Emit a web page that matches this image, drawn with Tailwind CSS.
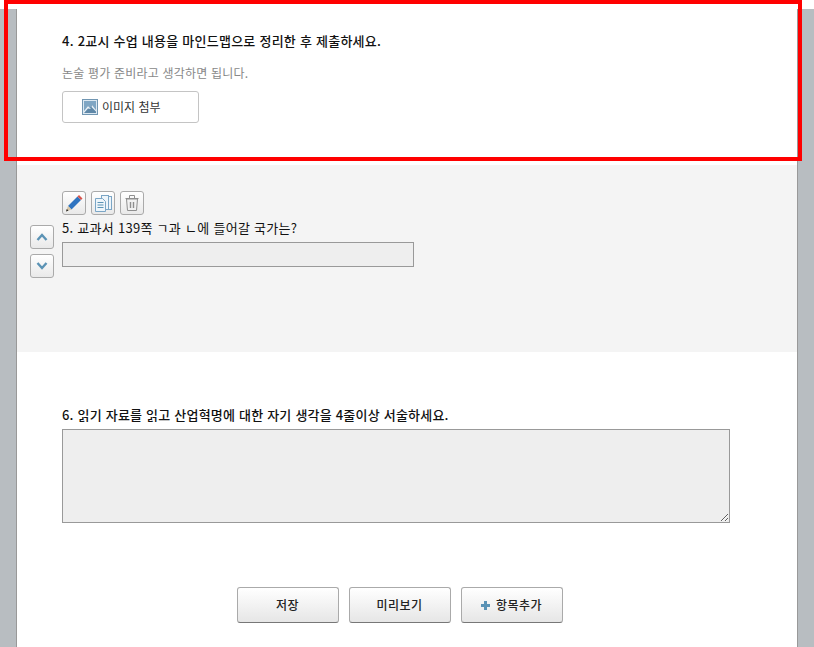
<!DOCTYPE html>
<html lang="ko">
<head>
    <meta charset="UTF-8">
    <title>항목 편집</title>
    <script src="https://cdn.jsdelivr.net/npm/@tailwindcss/browser@4"></script>
</head>
<body class="bg-white font-['Noto_Sans_CJK_KR','Liberation_Sans',sans-serif] text-[13px] text-[#222]">
    <div class="relative h-[647px] overflow-hidden">
        <!-- Gray page background -->
        <div class="mt-[9px] h-[638px] bg-[#b8bdc1] pl-[16px]">
            <div class="h-full w-[782px] border-x border-[#999] bg-white">

                <!-- Question 4 -->
                <section class="h-[156px] pl-[45px] pt-[22px]">
                    <p class="h-[20px] leading-[20px] font-medium tracking-[0.24px] text-[#111]">4. 2교시 수업 내용을 마인드맵으로 정리한 후 제출하세요.</p>
                    <p class="mt-[12px] h-[20px] leading-[20px] text-[12px] tracking-[0.2px] text-[#888]">논술 평가 준비라고 생각하면 됩니다.</p>
                    <button class="mt-[8px] flex h-[32px] w-[137px] items-center gap-[4px] rounded-[3px] border border-[#c4c4c4] bg-white pl-[19px] text-[12px] text-[#333]">
                        <svg width="16" height="16" viewBox="0 0 16 16">
                            <rect x="0.5" y="0.5" width="15" height="15" fill="#dce8f1" stroke="#7196b2"/>
                            <rect x="2" y="2" width="12" height="12" fill="#7fa6c4"/>
                            <path d="M2 12 L6 7 L8 9 L10 6 L14 11 L14 14 L2 14 Z" fill="#5f88a8"/>
                            <path d="M2 12 L6 7 L8 9 L9 10 L6 9.5 L2 14 Z" fill="#e8f0f6"/>
                            <path d="M10 6 L14 11 L14 12.5 L9.5 8 Z" fill="#e8f0f6"/>
                        </svg>
                        이미지 첨부
                    </button>
                </section>

                <!-- Question 5 -->
                <section class="h-[187px] bg-[#f4f4f4] pl-[13px] pt-[26px]">
                    <div class="grid grid-cols-[24px_352px] gap-x-[8px]">
                        <div></div>
                        <div class="flex gap-[5px]">
                            <button class="flex h-[24px] w-[24px] items-center justify-center rounded-[3px] border border-[#aaa] bg-gradient-to-b from-white to-[#e9e9e9]">
                                <svg width="20" height="20" viewBox="0 0 20 20">
                                    <path d="M4 13 L13.5 3.5 L17 7 L7.5 16.5 Z" fill="#2f74c0"/>
                                    <path d="M13.5 3.5 L15 2 L18.5 5.5 L17 7 Z" fill="#d9534a"/>
                                    <path d="M4 13 L7.5 16.5 L2 18.5 Z" fill="#d8c7a8"/>
                                    <path d="M2 18.5 L2.8 16 L4.5 17.6 Z" fill="#222"/>
                                </svg>
                            </button>
                            <button class="flex h-[24px] w-[24px] items-center justify-center rounded-[3px] border border-[#aaa] bg-gradient-to-b from-white to-[#e9e9e9]">
                                <svg width="20" height="20" viewBox="0 0 20 20" fill="#eef5fa" stroke="#7ba6c6">
                                    <rect x="11.5" y="3.5" width="7" height="13"/>
                                    <rect x="8.5" y="2.5" width="7" height="14"/>
                                    <path d="M2.5 5.5 H9.5 L12.5 8.5 V18.5 H2.5 Z"/>
                                    <path d="M4.5 9.5 H10.5 M4.5 12 H10.5 M4.5 14.5 H10.5" fill="none" stroke="#5b93b5"/>
                                </svg>
                            </button>
                            <button class="flex h-[24px] w-[24px] items-center justify-center rounded-[3px] border border-[#aaa] bg-gradient-to-b from-white to-[#e9e9e9]">
                                <svg width="16" height="18" viewBox="0 0 16 18" fill="none" stroke="#8f8f8f">
                                    <path d="M1.5 4.5 H14.5 M5.5 4 V1.5 H10.5 V4"/>
                                    <path d="M2.5 5 L3.5 16.5 H12.5 L13.5 5 Z" fill="#f2f2f2"/>
                                    <path d="M6.5 8 V14 M9.5 8 V14" stroke-width="1.4"/>
                                </svg>
                            </button>
                        </div>

                        <div class="mt-[10px] flex flex-col gap-[5px]">
                            <button class="flex h-[24px] w-[24px] items-center justify-center rounded-[3px] border border-[#aaa] bg-gradient-to-b from-white to-[#e9e9e9]">
                                <svg width="12" height="8" viewBox="0 0 12 8" fill="none" stroke="#5b93b5" stroke-width="2.4"><path d="M1.5 7 L6 2 L10.5 7"/></svg>
                            </button>
                            <button class="flex h-[24px] w-[24px] items-center justify-center rounded-[3px] border border-[#aaa] bg-gradient-to-b from-white to-[#e9e9e9]">
                                <svg width="12" height="8" viewBox="0 0 12 8" fill="none" stroke="#5b93b5" stroke-width="2.4"><path d="M1.5 1 L6 6 L10.5 1"/></svg>
                            </button>
                        </div>
                        <div class="mt-[3px]">
                            <p class="h-[20px] leading-[20px] tracking-[0.28px] text-[#111]">5. 교과서 139쪽 ㄱ과 ㄴ에 들어갈 국가는?</p>
                            <input type="text" disabled class="mt-[4px] block h-[25px] w-[352px] border border-[#999] bg-[#eee]">
                        </div>
                    </div>
                </section>

                <!-- Question 6 -->
                <section class="pl-[45px] pt-[53px]">
                    <p class="h-[20px] leading-[20px] font-medium tracking-[0.21px] text-[#111]">6. 읽기 자료를 읽고 산업혁명에 대한 자기 생각을 4줄이상 서술하세요.</p>
                    <textarea disabled class="mt-[4px] block h-[94px] w-[668px] border border-[#999] bg-[#eee]"></textarea>
                </section>

                <!-- Bottom buttons -->
                <div class="mt-[64px] flex justify-center gap-[10px] pr-[15px]">
                    <button class="h-[36px] w-[102px] rounded-[3px] border border-[#aaa] border-b-[#777] bg-gradient-to-b from-white to-[#e6e6e6] text-[12px] font-medium tracking-[0.5px] text-[#222]">저장</button>
                    <button class="h-[36px] w-[102px] rounded-[3px] border border-[#aaa] border-b-[#777] bg-gradient-to-b from-white to-[#e6e6e6] text-[12px] font-medium tracking-[0.5px] text-[#222]">미리보기</button>
                    <button class="flex h-[36px] w-[102px] items-center justify-center gap-[6px] rounded-[3px] border border-[#aaa] border-b-[#777] bg-gradient-to-b from-white to-[#e6e6e6] text-[12px] font-medium tracking-[0.5px] text-[#222]">
                        <svg width="9" height="9" viewBox="0 0 9 9"><path d="M3 0 H6 V3 H9 V6 H6 V9 H3 V6 H0 V3 H3 Z" fill="#5b93b5"/></svg>
                        항목추가
                    </button>
                </div>
            </div>
        </div>

        <!-- Red highlight frame over question 4 -->
        <div class="absolute left-[4px] top-0 h-[161px] w-[798px] border-4 border-[#f00]"></div>
    </div>
</body>
</html>
